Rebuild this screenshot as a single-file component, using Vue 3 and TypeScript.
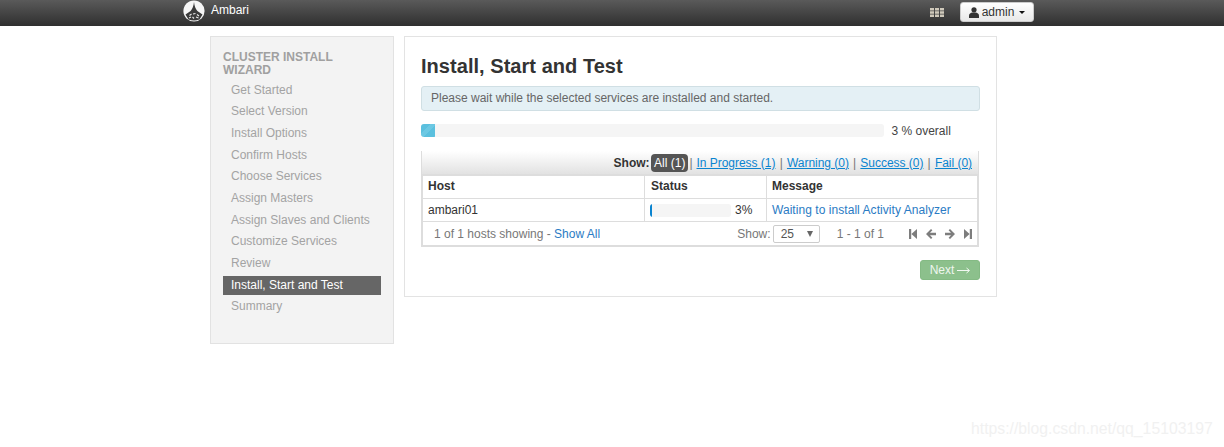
<script setup lang="ts">
const steps: string[] = [
  'Get Started', 'Select Version', 'Install Options', 'Confirm Hosts', 'Choose Services',
  'Assign Masters', 'Assign Slaves and Clients', 'Customize Services', 'Review',
  'Install, Start and Test', 'Summary'
]
const activeStep = 'Install, Start and Test'
const filters: string[] = ['In Progress (1)', 'Warning (0)', 'Success (0)', 'Fail (0)']
</script>

<template>
  <div class="page">
    <header class="nav">
      <div class="brand">
        <svg class="logo" width="22" height="22" viewBox="0 0 22 22">
          <circle cx="11" cy="11" r="10.6" fill="#f6f6f6" />
          <path d="M11 2 C11.4 6 12.6 9 14.4 11 L19.5 14.6 L16.5 19.5 Q11 21.5 5.5 19.5 L2.5 14.6 L7.6 11 C9.4 9 10.6 6 11 2Z" fill="#3b3b3b" />
          <path d="M6.5 15.5l2-1.5M10 14l2.5-.5M14 14.5l2 1.5M6 18l2-1M9.5 17l1.5 1.5M13 17l2.5 1" stroke="#e8e8e8" stroke-width="1.1" fill="none" />
        </svg>
        <span class="brand-name">Ambari</span>
      </div>
      <div class="nav-right">
        <svg class="grid-icon" width="14" height="9" viewBox="0 0 14 9">
          <path fill="#cfc9bb" d="M0 0h4v2.5H0zM5 0h4v2.5H5zM10 0h4v2.5h-4zM0 3.25h4v2.5H0zM5 3.25h4v2.5H5zM10 3.25h4v2.5h-4zM0 6.5h4V9H0zM5 6.5h4V9H5zM10 6.5h4V9h-4z" />
        </svg>
        <button class="user-btn">
          <svg width="10" height="11" viewBox="0 0 10 11">
            <circle cx="5" cy="2.8" r="2.6" fill="#333" />
            <path d="M0 11V8.4C0 6.6 1.8 5.6 3.4 5.4h3.2C8.2 5.6 10 6.6 10 8.4V11Z" fill="#333" />
          </svg>
          <span>admin</span>
          <i class="caret"></i>
        </button>
      </div>
    </header>

    <div class="content">
      <aside class="sidebar">
        <h4 class="side-title">CLUSTER INSTALL WIZARD</h4>
        <ul class="steps">
          <li v-for="s in steps" :key="s" class="step" :class="{ active: s === activeStep }">{{ s }}</li>
        </ul>
      </aside>

      <main class="panel">
        <h2 class="title">Install, Start and Test</h2>
        <div class="notice">Please wait while the selected services are installed and started.</div>

        <div class="overall">
          <div class="track"><div class="fill" :style="{ width: '3%' }"></div></div>
          <span class="overall-label">3 % overall</span>
        </div>

        <div class="box">
          <div class="filter-bar">
            <b class="show">Show:</b>
            <span class="pill">All (1)</span>
            <span class="sep first">|</span>
            <template v-for="(f, i) in filters" :key="f">
              <span v-if="i > 0" class="sep">|</span>
              <a class="flink">{{ f }}</a>
            </template>
          </div>
          <div class="table">
            <div class="row head">
              <div class="c1">Host</div>
              <div class="c2">Status</div>
              <div class="c3">Message</div>
            </div>
            <div class="row body">
              <div class="c1">ambari01</div>
              <div class="c2 status">
                <div class="mini"><div class="mini-fill" :style="{ width: '3%' }"></div></div>
                <span>3%</span>
              </div>
              <div class="c3"><a class="link wide">Waiting to install Activity Analyzer</a></div>
            </div>
          </div>
          <div class="foot">
            <div class="foot-left">1 of 1 hosts showing - <a class="link">Show All</a></div>
            <div class="foot-right">
              <span class="show-lbl">Show:</span>
              <div class="select"><span>25</span><i class="sel-arrow"></i></div>
              <span class="range">1 - 1 of 1</span>
              <div class="pager">
                <svg width="8" height="10" viewBox="0 0 8 10"><path fill="#7d7d7d" d="M0 0h2.2v10H0zM8 0v10L2.4 5z" /></svg>
                <svg width="10" height="10" viewBox="0 0 10 10"><path fill="#7d7d7d" d="M5 0l1.4 1.3L4 3.8h6v2.4H4l2.4 2.5L5 10 0 5z" /></svg>
                <svg width="10" height="10" viewBox="0 0 10 10"><path fill="#7d7d7d" d="M5 0L3.6 1.3 6 3.8H0v2.4h6L3.6 8.7 5 10l5-5z" /></svg>
                <svg width="8" height="10" viewBox="0 0 8 10"><path fill="#7d7d7d" d="M8 0H5.8v10H8zM0 0v10l5.6-5z" /></svg>
              </div>
            </div>
          </div>
        </div>

        <div class="actions">
          <button class="next">
            <span>Next</span>
            <svg width="13" height="7" viewBox="0 0 13 7"><path d="M0 3.5h12M9.5 1l3 2.5-3 2.5" stroke="#f2f8f2" stroke-width="1" fill="none" /></svg>
          </button>
        </div>
      </main>
    </div>

    <div class="watermark">https://blog.csdn.net/qq_15103197</div>
  </div>
</template>

<style>
html, body { margin: 0; padding: 0; background: #fff; }
</style>

<style scoped>
.page {
  position: relative;
  width: 1224px;
  height: 447px;
  overflow: hidden;
  font-family: "Liberation Sans", Arial, sans-serif;
  font-size: 12px;
  color: #333;
  background: #fff;
}
.nav {
  height: 26px;
  box-sizing: border-box;
  background: linear-gradient(to bottom, #5a5a5a 0%, #2f2f2f 100%);
  display: flex;
  justify-content: space-between;
  padding: 0 190px 0 183px;
}
.brand { display: flex; align-items: flex-start; }
.logo { display: block; margin-top: 0; }
.brand-name {
  color: #fff;
  font-size: 12px;
  margin-left: 6px;
  line-height: 20px;
}
.nav-right { display: flex; align-items: center; height: 24px; }
.grid-icon { margin-right: 16px; margin-left: 1px; margin-top: 0; }
.user-btn {
  width: 74px;
  height: 20px;
  padding: 0;
  border: 1px solid #ccc;
  border-radius: 3px;
  background: linear-gradient(to bottom, #fff, #e8e8e8);
  font: 12px "Liberation Sans", Arial, sans-serif;
  color: #333;
  display: flex;
  align-items: center;
  justify-content: center;
  gap: 3px;
}
.caret {
  width: 0;
  height: 0;
  margin-left: 2px;
  border-left: 3px solid transparent;
  border-right: 3px solid transparent;
  border-top: 3px solid #111;
}
.content {
  display: flex;
  align-items: flex-start;
  padding: 10px 0 0 210px;
  gap: 10px;
}
.sidebar {
  width: 184px;
  height: 308px;
  box-sizing: border-box;
  background: #f3f3f3;
  border: 1px solid #e2e2e2;
  padding: 14px 12px 0 12px;
}
.side-title {
  margin: 0;
  font-size: 12px;
  font-weight: bold;
  line-height: 13px;
  color: #a0a0a0;
  width: 125px;
}
.steps { list-style: none; margin: 2.6px 0 0; padding: 0; }
.step {
  height: 21.7px;
  line-height: 21.7px;
  padding-left: 8px;
  color: #a3a3a3;
  width: 158px;
  box-sizing: border-box;
}
.step.active {
  color: #fff;
  background: #666;
  background-clip: padding-box;
  border-top: 1px solid transparent;
  border-bottom: 1px solid transparent;
  line-height: 19.7px;
}
.panel {
  width: 593px;
  height: 261px;
  box-sizing: border-box;
  background: #fff;
  border: 1px solid #e3e3e3;
  padding: 0 16px 0 16px;
}
.title {
  margin: 17px 0 0;
  font-size: 20px;
  line-height: 24px;
  font-weight: bold;
  color: #333;
  letter-spacing: 0.04px;
}
.notice {
  margin-top: 8px;
  height: 25px;
  box-sizing: border-box;
  border: 1px solid #d0dfe4;
  border-radius: 3px;
  background: #e4f0f5;
  color: #666;
  line-height: 23px;
  padding-left: 9px;
}
.overall {
  display: flex;
  align-items: center;
  margin-top: 13px;
  height: 13px;
}
.track {
  width: 463px;
  height: 13px;
  background: #f5f5f5;
  border-radius: 3px;
  overflow: hidden;
}
.fill {
  height: 100%;
  background: repeating-linear-gradient(135deg, #5bc0de 0 7px, #6cc8e3 7px 11px);
}
.overall-label { margin-left: 7.5px; color: #444; }
.box {
  margin-top: 14px;
  width: 558px;
  box-sizing: border-box;
  border-left: 1px solid #ddd;
  border-right: 1px solid #ddd;
  border-bottom: 2px solid #ddd;
}
.filter-bar {
  height: 23px;
  box-sizing: border-box;
  display: flex;
  align-items: center;
  justify-content: flex-end;
  padding-right: 6px;
  background: linear-gradient(to bottom, #fff, #e2e2e2);
  white-space: nowrap;
}
.show { color: #333; margin-right: 1.5px; }
.pill {
  background: #555;
  color: #fff;
  border-radius: 4px;
  padding: 0 3px;
  height: 18px;
  line-height: 18px;
}
.sep { color: #777; margin: 0 4.2px; }
.sep.first { margin: 0 4px 0 1px; }
.flink { color: #0a84d0; text-decoration: underline; letter-spacing: -0.03px; }
.table { border: 1px solid #ddd; border-top-width: 2px; border-bottom: 0; }
.row { display: flex; border-bottom: 1px solid #ddd; box-sizing: border-box; }
.row.head { height: 23px; font-weight: bold; }
.row.body { height: 23px; }
.c1, .c2, .c3 { padding-left: 5px; box-sizing: border-box; line-height: 21px; color: #333; }
.c1 { width: 222px; border-right: 1px solid #ddd; }
.c2 { width: 122px; border-right: 1px solid #ddd; padding-left: 6px; }
.c3 { flex: 1; }
.row.body .c1, .row.body .c2, .row.body .c3 { line-height: 22px; }
.c2.status { display: flex; align-items: center; gap: 4px; padding-left: 5px; }
.mini {
  width: 81px;
  height: 13px;
  background: #f5f5f5;
  border-radius: 3px;
  overflow: hidden;
}
.mini-fill { height: 100%; background: #0a84d0; }
.link { color: #2a7bc4; }
.link.wide { letter-spacing: 0.05px; }
.foot {
  height: 23px;
  border-left: 1px solid #ddd;
  border-right: 1px solid #ddd;
  display: flex;
  align-items: center;
  justify-content: space-between;
  color: #777;
  padding-left: 11px;
}
.foot-right { display: flex; align-items: center; }
.show-lbl { margin-right: 2px; }
.select {
  width: 47px;
  height: 18px;
  box-sizing: border-box;
  border: 1px solid #ccc;
  border-radius: 2px;
  display: flex;
  align-items: center;
  justify-content: space-between;
  padding: 1px 6px 0 7px;
  color: #555;
}
.sel-arrow {
  width: 0;
  height: 0;
  border-left: 3px solid transparent;
  border-right: 3px solid transparent;
  border-top: 6px solid #666;
}
.range { margin-left: 17px; }
.pager { display: flex; align-items: center; margin-left: 25px; margin-right: 5px; gap: 9px; }
.actions { display: flex; justify-content: flex-end; margin-top: 13px; }
.next {
  width: 60px;
  height: 20px;
  padding: 0;
  border: 1px solid #84ba84;
  border-radius: 3px;
  background: #8cc08c;
  color: #eef6ee;
  font: 12px "Liberation Sans", Arial, sans-serif;
  display: flex;
  align-items: center;
  justify-content: center;
  gap: 3px;
}
.watermark {
  position: absolute;
  left: 971px;
  top: 420px;
  font-size: 15.75px;
  line-height: 18px;
  color: #f1f1f1;
  font-family: "Liberation Sans", Arial, sans-serif;
  white-space: nowrap;
}
</style>
